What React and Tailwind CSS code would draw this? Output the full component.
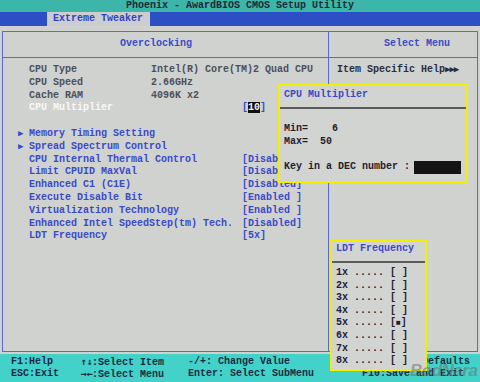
import React from "react";

const mono = "font-['Liberation_Mono','DejaVu_Sans_Mono',monospace]";

function Row({ marker, label, value, labelW = "w-[122px]", labelCls = "text-[#3a4ac8]", valueCls = "text-[#3a4ac8]" }) {
  return (
    <div className="flex h-[12.8px] items-center whitespace-pre">
      <span className="w-[11px] text-[9px] text-[#3a4ac8] leading-none">{marker || ""}</span>
      <span className={`${labelW} ${labelCls}`}>{label}</span>
      <span className={valueCls}>{value}</span>
    </div>
  );
}

const arrowCls = "inline-block w-[6px] text-center font-['DejaVu_Sans_Mono',monospace] text-[10px] tracking-[-1px]";

export default function App() {
  const gray = "text-[#4c505a]";
  return (
    <div className={`relative w-[480px] h-[382px] overflow-hidden bg-[#d0d2d0] ${mono} text-[10px] leading-[12.8px] font-bold`}>
      {/* title bar */}
      <div className="h-[12px] bg-[#3cb6a8] text-center text-[#1c2838] leading-[12px]">
        Phoenix - AwardBIOS CMOS Setup Utility
      </div>
      {/* menu bar */}
      <div className="h-[14px] bg-[#2c4fc6] flex">
        <div className="ml-[47px] w-[103px] h-[14px] bg-[#cbcdd0] pl-[6px] text-[#2f44c0] leading-[14px]">
          Extreme Tweaker
        </div>
      </div>
      {/* main frame */}
      <div className="pt-[5px] px-[2px]">
        <div className="h-[321px] border border-[#5a68d8] flex flex-col">
          <div className="flex h-[26px] border-b border-[#5a68d8]">
            <div className="w-[326px] border-r border-[#5a68d8] pl-[117px] pt-[6px] text-[#3a4ac8]">Overclocking</div>
            <div className="flex-1 pl-[55px] pt-[6px] text-[#3a4ac8]">Select Menu</div>
          </div>
          <div className="flex flex-1">
            <div className="w-[326px] border-r border-[#5a68d8] pt-[6px] pl-[15px]">
              <Row label="CPU Type" value="Intel(R) Core(TM)2 Quad CPU" labelCls={gray} valueCls={gray} />
              <Row label="CPU Speed" value="2.66GHz" labelCls={gray} valueCls={gray} />
              <Row label="Cache RAM" value="4096K x2" labelCls={gray} valueCls={gray} />
              <Row
                label="CPU Multiplier"
                labelW="w-[213px]"
                labelCls="text-[#f8f8f8]"
                value={
                  <>
                    [<span className="bg-[#111] text-[#f0f0f0]">10</span>]
                  </>
                }
              />
              <div className="h-[12.8px]" />
              <Row marker="▶" label="Memory Timing Setting" labelW="w-[213px]" value="" />
              <Row marker="▶" label="Spread Spectrum Control" labelW="w-[213px]" value="" />
              <Row label="CPU Internal Thermal Control" labelW="w-[213px]" value="[Disabled]" />
              <Row label="Limit CPUID MaxVal" labelW="w-[213px]" value="[Disabled]" />
              <Row label="Enhanced C1 (C1E)" labelW="w-[213px]" value="[Disabled]" />
              <Row label="Execute Disable Bit" labelW="w-[213px]" value="[Enabled ]" />
              <Row label="Virtualization Technology" labelW="w-[213px]" value="[Enabled ]" />
              <Row label="Enhanced Intel SpeedStep(tm) Tech." labelW="w-[213px]" value="[Disabled]" />
              <Row label="LDT Frequency" labelW="w-[213px]" value="[5x]" />
            </div>
            <div className="flex-1 pt-[6px] pl-[8px] text-[#2a2e3a] whitespace-pre">
              Item Specific Help<span className="text-[9px] tracking-[-1px]">▶▶▶</span>
            </div>
          </div>
        </div>
      </div>
      {/* footer */}
      <div className="mt-[2px] h-[28px] bg-[#42d2ca] pt-[2px] pl-[11px] text-[#1c2a44] whitespace-pre">
        <div className="flex h-[12px] leading-[12px]">
          <span className="w-[69px]">F1:Help</span>
          <span className="w-[108px]"><span className={arrowCls}>↑</span><span className={arrowCls}>↓</span>:Select Item</span>
          <span className="w-[180px]">-/+: Change Value</span>
          <span>F5:Setup Defaults</span>
        </div>
        <div className="flex h-[12px] leading-[12px]">
          <span className="w-[69px]">ESC:Exit</span>
          <span className="w-[108px]"><span className={arrowCls}>→</span><span className={arrowCls}>←</span>:Select Menu</span>
          <span className="w-[174px]">Enter: Select SubMenu</span>
          <span>F10:Save and Exit</span>
        </div>
      </div>

      {/* popup: CPU Multiplier */}
      <div className="absolute left-[278px] top-[84px] w-[190px] h-[99px] border-2 border-[#f2f000] bg-[#d2d4d2] flex flex-col">
        <div className="h-[23px] pt-[3px] pl-[4px] text-[#3a4ac8] border-b-2 border-[#5c5c5c]">CPU Multiplier</div>
        <div className="pl-[4px] pt-[14px] text-[#1e2230] whitespace-pre">
          <div>Min=    6</div>
          <div>Max=  50</div>
          <div className="mt-[12px] flex items-center">
            <span>Key in a DEC number : </span>
            <span className="ml-[-2px] inline-block w-[47px] h-[13px] bg-[#141414]" />
          </div>
        </div>
      </div>

      {/* popup: LDT Frequency */}
      <div className="absolute left-[330px] top-[240px] w-[97px] h-[131px] border-2 border-[#f2f000] bg-[#d2d4d2] flex flex-col">
        <div className="h-[21px] pl-[4px] pt-[1px] text-[#3a4ac8] border-b-2 border-[#5c5c5c]">LDT Frequency</div>
        <div className="pl-[4px] pt-[4px] text-[#1e2230] whitespace-pre leading-[12.6px]">
          {["1x", "2x", "3x", "4x", "5x", "6x", "7x", "8x"].map((k) => (
            <div key={k} className="h-[12.6px]">
              {k} ..... [{k === "5x" ? <span className="text-[8px]">■</span> : " "}]
            </div>
          ))}
        </div>
      </div>

      {/* watermark */}
      <div className="absolute left-[410px] top-[362px] font-['Liberation_Sans',sans-serif] text-[17px] italic font-bold text-[#6a6a6a] opacity-50 leading-none tracking-[-0.5px]">
        BodNara
      </div>
    </div>
  );
}
